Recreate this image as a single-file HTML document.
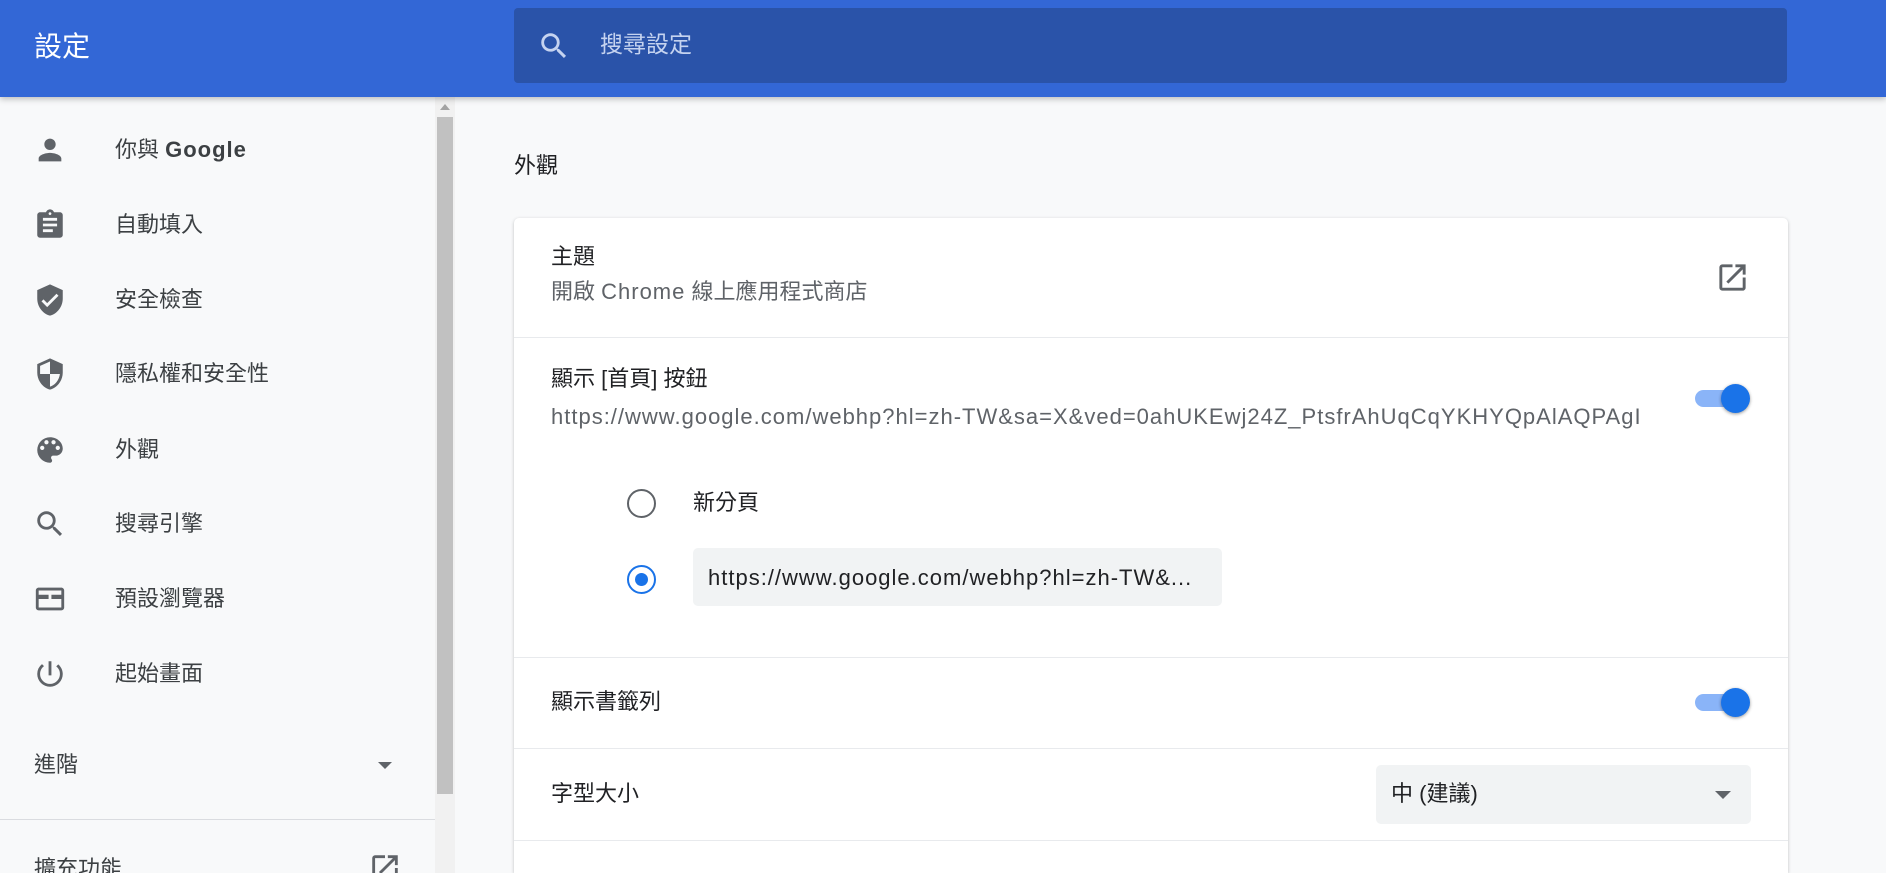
<!DOCTYPE html>
<html style="overflow:hidden;width:1886px;height:873px"><head><meta charset="utf-8"><style>
*{box-sizing:border-box;margin:0;padding:0}
body{width:1886px;height:873px;overflow:hidden;background:#f8f9fa;font-family:"Liberation Sans","Noto Sans CJK TC",sans-serif;color:#202124;position:relative}
.hdr{position:absolute;left:0;top:0;width:1886px;height:97px;background:#3367d6;box-shadow:0 2px 6px rgba(0,0,0,.25);z-index:2}
.abs{position:absolute}
.t{position:absolute;white-space:nowrap;line-height:1}
.side{color:#3c4043;font-size:22px}
.ic{position:absolute;width:34px;height:34px}
.card{position:absolute;left:514px;top:218px;width:1274px;height:655px;background:#fff;border-radius:5px 5px 0 0;box-shadow:0 1px 3px rgba(60,64,67,.3)}
.hr{position:absolute;left:0;width:1274px;height:1px;background:#e8eaed}
.tog{position:absolute;width:58px;height:30px}
.tog .tr{position:absolute;left:2px;top:7px;width:50px;height:17px;border-radius:9px;background:#8ab4f8}
.tog .kn{position:absolute;left:28px;top:1px;width:29px;height:29px;border-radius:50%;background:#1a73e8;box-shadow:0 1px 3px rgba(0,0,0,.4)}
.ls{letter-spacing:1px}
</style></head><body>
<div class="hdr">
<div class="t" style="left:34px;top:33px;font-size:28px;color:#fff">設定</div>
<div class="abs" style="left:514px;top:8px;width:1273px;height:75px;background:#2a53a9;border-radius:4px"></div>
<svg class="abs" style="left:537px;top:29px" width="34" height="34" viewBox="0 0 24 24"><path fill="#c5d3f0" d="M15.5 14h-.79l-.28-.27A6.47 6.47 0 0016 9.5 6.5 6.5 0 109.5 16c1.61 0 3.09-.59 4.23-1.57l.27.28v.79l5 4.99L20.49 19l-4.99-5zm-6 0C7.01 14 5 11.990 5 9.5S7.01 5 9.5 5 14 7.01 14 9.5 11.99 14 9.5 14z"/></svg>
<div class="t" style="left:600px;top:33px;font-size:23px;color:#c5d3f0">搜尋設定</div>
</div>
<div class="abs" style="left:435px;top:97px;width:20px;height:776px;background:#f1f1f1"></div>
<div class="abs" style="left:437px;top:117px;width:16px;height:677px;background:#c1c1c1"></div>
<div class="abs" style="left:440px;top:104px;width:0;height:0;border-left:5px solid transparent;border-right:5px solid transparent;border-bottom:6px solid #a3a3a3"></div>
<div class="side">
<svg class="ic" style="left:33px;top:133px" viewBox="0 0 24 24"><path fill="#5f6368" d="M12 12c2.21 0 4-1.790 4-4s-1.79-4-4-4-4 1.79-4 4 1.79 4 4 4zm0 2c-2.67 0-8 1.34-8 4v2h16v-2c0-2.66-5.33-4-8-4z"/></svg>
<div class="t" style="left:115px;top:139px">你與 <b class="ls" style="font-weight:bold">Google</b></div>
<svg class="ic" style="left:33px;top:208px" viewBox="0 0 24 24"><path fill="#5f6368" d="M19 3h-4.18C14.4 1.84 13.3 1 12 1s-2.4.84-2.82 2H5c-1.1 0-2 .9-2 2v14c0 1.1.9 2 2 2h14c1.1 0 2-.9 2-2V5c0-1.1-.9-2-2-2zm-7 0c.55 0 1 .45 1 1s-.45 1-1 1-1-.45-1-1 .45-1 1-1zm2 14H7v-2h7v2zm3-4H7v-2h10v2zm0-4H7V7h10v2z"/></svg>
<div class="t" style="left:115px;top:214px">自動填入</div>
<svg class="ic" style="left:33px;top:283px" viewBox="0 0 24 24"><path fill="#5f6368" d="M12 1L3 5v6c0 5.55 3.84 10.74 9 12 5.16-1.26 9-6.45 9-12V5l-9-4zm-2 16l-4-4 1.41-1.41L10 14.17l6.59-6.59L18 9l-8 8z"/></svg>
<div class="t" style="left:115px;top:289px">安全檢查</div>
<svg class="ic" style="left:33px;top:357px" viewBox="0 0 24 24"><path fill="#5f6368" d="M12 1L3 5v6c0 5.55 3.84 10.74 9 12 5.16-1.26 9-6.45 9-12V5l-9-4zm0 10.99h7c-.53 4.12-3.28 7.79-7 8.94V12H5V6.3l7-3.11v8.8z"/></svg>
<div class="t" style="left:115px;top:363px">隱私權和安全性</div>
<svg class="ic" style="left:33px;top:433px" viewBox="0 0 24 24"><path fill="#5f6368" d="M12 3a9 9 0 000 18c.83 0 1.5-.67 1.5-1.5 0-.39-.15-.74-.39-1.01-.23-.26-.38-.61-.38-.99 0-.83.67-1.5 1.5-1.5H16c2.76 0 5-2.240 5-5 0-4.42-4.03-8-9-8zm-5.5 9c-.83 0-1.5-.67-1.5-1.5S5.67 9 6.5 9 8 9.67 8 10.5 7.33 12 6.5 12zm3-4C8.67 8 8 7.33 8 6.5S8.67 5 9.5 5s1.5.67 1.5 1.5S10.33 8 9.5 8zm5 0c-.83 0-1.5-.67-1.5-1.5S13.67 5 14.5 5s1.5.67 1.5 1.5S15.33 8 14.5 8zm3 4c-.83 0-1.5-.67-1.5-1.5S16.67 9 17.5 9s1.5.67 1.5 1.5-.67 1.5-1.5 1.5z"/></svg>
<div class="t" style="left:115px;top:439px">外觀</div>
<svg class="ic" style="left:33px;top:507px" viewBox="0 0 24 24"><path fill="#5f6368" d="M15.5 14h-.79l-.28-.27A6.47 6.47 0 0016 9.5 6.5 6.5 0 109.5 16c1.61 0 3.09-.59 4.23-1.57l.27.28v.79l5 4.99L20.49 19l-4.99-5zm-6 0C7.01 14 5 11.99 5 9.5S7.01 5 9.5 5 14 7.01 14 9.5 11.99 14 9.5 14z"/></svg>
<div class="t" style="left:115px;top:513px">搜尋引擎</div>
<svg class="ic" style="left:33px;top:582px" viewBox="0 0 24 24"><path fill="#5f6368" d="M20 4H4c-1.1 0-2 .9-2 2v12c0 1.1.9 2 2 2h16c1.1 0 2-.9 2-2V6c0-1.1-.9-2-2-2zm0 14H4v-6h7V9H4V6h16v12zm-7-6h7V9h-7v3z"/></svg>
<div class="t" style="left:115px;top:588px">預設瀏覽器</div>
<svg class="ic" style="left:33px;top:657px" viewBox="0 0 24 24"><path fill="#5f6368" d="M13 3h-2v10h2V3zm4.83 2.17l-1.42 1.42A6.92 6.92 0 0119 12c0 3.87-3.13 7-7 7s-7-3.13-7-7c0-2.27 1.08-4.27 2.76-5.55L6.35 5.04A8.96 8.96 0 003 12a9 9 0 0018 0c0-2.74-1.23-5.18-3.17-6.83z"/></svg>
<div class="t" style="left:115px;top:663px">起始畫面</div>
<div class="t" style="left:34px;top:754px">進階</div>
<div class="abs" style="left:378px;top:762px;border-left:7px solid transparent;border-right:7px solid transparent;border-top:7px solid #5f6368"></div>
<div class="abs" style="left:0;top:819px;width:435px;height:1px;background:#dadce0"></div>
<div class="t" style="left:34px;top:858px">擴充功能</div>
<svg class="ic" style="left:368px;top:851px" viewBox="0 0 24 24"><path fill="#5f6368" d="M19 19H5V5h7V3H5a2 2 0 00-2 2v14a2 2 0 002 2h14c1.1 0 2-.9 2-2v-7h-2v7zM14 3v2h3.59l-9.83 9.830 1.41 1.41L19 6.41V10h2V3h-7z"/></svg>
</div>
<div class="t" style="left:514px;top:155px;font-size:22px;color:#202124">外觀</div>
<div class="card">
<div class="t" style="left:37px;top:28px;font-size:22px">主題</div>
<div class="t" style="left:37px;top:63px;font-size:22px;color:#5f6368">開啟 <span class="ls">Chrome</span> 線上應用程式商店</div>
<svg class="abs" style="left:1201px;top:42px" width="35" height="35" viewBox="0 0 24 24"><path fill="#5f6368" d="M19 19H5V5h7V3H5a2 2 0 00-2 2v14a2 2 0 002 2h14c1.1 0 2-.9 2-2v-7h-2v7zM14 3v2h3.59l-9.83 9.83 1.41 1.41L19 6.41V10h2V3h-7z"/></svg>
<div class="hr" style="top:119px"></div>
<div class="t" style="left:37px;top:150px;font-size:22px">顯示 [首頁] 按鈕</div>
<div class="t ls" style="left:37px;top:188px;font-size:22px;color:#5f6368">https://www.google.com/webhp?hl=zh-TW&amp;sa=X&amp;ved=0ahUKEwj24Z_PtsfrAhUqCqYKHYQpAlAQPAgI</div>
<div class="tog" style="left:1179px;top:165px"><div class="tr"></div><div class="kn"></div></div>
<div class="abs" style="left:113px;top:271px;width:29px;height:29px;border-radius:50%;border:2.5px solid #5f6368"></div>
<div class="t" style="left:179px;top:274px;font-size:22px">新分頁</div>
<div class="abs" style="left:113px;top:347px;width:29px;height:29px;border-radius:50%;border:2.5px solid #1a73e8"></div>
<div class="abs" style="left:121px;top:355px;width:13px;height:13px;border-radius:50%;background:#1a73e8"></div>
<div class="abs" style="left:179px;top:330px;width:529px;height:58px;background:#f1f3f4;border-radius:5px"></div>
<div class="t ls" style="left:194px;top:349px;font-size:22px">https://www.google.com/webhp?hl=zh-TW&amp;...</div>
<div class="hr" style="top:439px"></div>
<div class="t" style="left:37px;top:473px;font-size:22px">顯示書籤列</div>
<div class="tog" style="left:1179px;top:469px"><div class="tr"></div><div class="kn"></div></div>
<div class="hr" style="top:530px"></div>
<div class="t" style="left:37px;top:565px;font-size:22px">字型大小</div>
<div class="abs" style="left:862px;top:547px;width:375px;height:59px;background:#f1f3f4;border-radius:5px"></div>
<div class="t" style="left:877px;top:565px;font-size:22px">中 (建議)</div>
<div class="abs" style="left:1201px;top:573px;border-left:8px solid transparent;border-right:8px solid transparent;border-top:8px solid #5f6368"></div>
<div class="hr" style="top:622px"></div>
</div>
</body></html>
